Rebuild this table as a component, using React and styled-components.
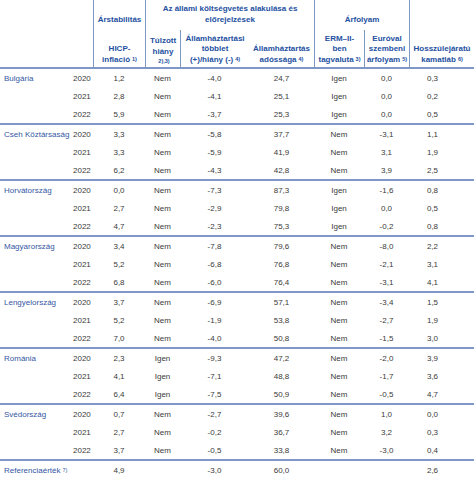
import React from "react";
import styled, { createGlobalStyle } from "styled-components";

const GlobalStyle = createGlobalStyle`
  body {
    margin: 0;
    background: #fff;
    font-family: "Liberation Sans", Arial, sans-serif;
  }
`;

const COLS = "70px 23px 52px 35px 69px 65px 50px 45px 65px";
const BLUE = "#24509f";
const LINE = "#7e97c4";

const Table = styled.div`
  width: 474px;
  font-size: 8px;
  color: #3a3a3a;
`;

const Header = styled.div`
  display: grid;
  grid-template-columns: ${COLS};
  grid-template-rows: 30px 37px;
  border-bottom: 2px solid ${LINE};
`;

const HeadCell = styled.div`
  grid-column: ${(p) => p.$col};
  grid-row: ${(p) => p.$row};
  display: flex;
  flex-direction: column;
  justify-content: flex-end;
  align-items: center;
  text-align: center;
  padding-bottom: ${(p) => (p.$top ? "5px" : "2px")};
  font-weight: bold;
  line-height: 10.5px;
  color: ${BLUE};
  white-space: nowrap;
  border-left: ${(p) => (p.$line ? `1px solid ${LINE}` : "none")};
`;

const Sup = styled.span`
  font-size: 5.5px;
  vertical-align: top;
  line-height: 8px;
  margin-left: 2px;
`;

const Group = styled.div`
  border-bottom: ${(p) => (p.$last ? "none" : `2px solid ${LINE}`)};
`;

const Row = styled.div`
  display: grid;
  grid-template-columns: ${COLS};
  height: 18px;
  align-items: center;
`;

const Country = styled.div`
  padding-left: 4px;
  color: #3557a3;
  white-space: nowrap;
`;

const Year = styled.div`
  padding-left: 3px;
`;

const Val = styled.div`
  text-align: center;
  padding-right: ${(p) => p.$pr || 0}px;
`;

const data = [
  ["Bulgária", [
    ["2020", "1,2", "Nem", "-4,0", "24,7", "Igen", "0,0", "0,3"],
    ["2021", "2,8", "Nem", "-4,1", "25,1", "Igen", "0,0", "0,2"],
    ["2022", "5,9", "Nem", "-3,7", "25,3", "Igen", "0,0", "0,5"],
  ]],
  ["Cseh Köztársaság", [
    ["2020", "3,3", "Nem", "-5,8", "37,7", "Nem", "-3,1", "1,1"],
    ["2021", "3,3", "Nem", "-5,9", "41,9", "Nem", "3,1", "1,9"],
    ["2022", "6,2", "Nem", "-4,3", "42,8", "Nem", "3,9", "2,5"],
  ]],
  ["Horvátország", [
    ["2020", "0,0", "Nem", "-7,3", "87,3", "Igen", "-1,6", "0,8"],
    ["2021", "2,7", "Nem", "-2,9", "79,8", "Igen", "0,0", "0,5"],
    ["2022", "4,7", "Nem", "-2,3", "75,3", "Igen", "-0,2", "0,8"],
  ]],
  ["Magyarország", [
    ["2020", "3,4", "Nem", "-7,8", "79,6", "Nem", "-8,0", "2,2"],
    ["2021", "5,2", "Nem", "-6,8", "76,8", "Nem", "-2,1", "3,1"],
    ["2022", "6,8", "Nem", "-6,0", "76,4", "Nem", "-3,1", "4,1"],
  ]],
  ["Lengyelország", [
    ["2020", "3,7", "Nem", "-6,9", "57,1", "Nem", "-3,4", "1,5"],
    ["2021", "5,2", "Nem", "-1,9", "53,8", "Nem", "-2,7", "1,9"],
    ["2022", "7,0", "Nem", "-4,0", "50,8", "Nem", "-1,5", "3,0"],
  ]],
  ["Románia", [
    ["2020", "2,3", "Igen", "-9,3", "47,2", "Nem", "-2,0", "3,9"],
    ["2021", "4,1", "Igen", "-7,1", "48,8", "Nem", "-1,7", "3,6"],
    ["2022", "6,4", "Igen", "-7,5", "50,9", "Nem", "-0,5", "4,7"],
  ]],
  ["Svédország", [
    ["2020", "0,7", "Nem", "-2,7", "39,6", "Nem", "1,0", "0,0"],
    ["2021", "2,7", "Nem", "-0,2", "36,7", "Nem", "3,2", "0,3"],
    ["2022", "3,7", "Nem", "-0,5", "33,8", "Nem", "-3,0", "0,4"],
  ]],
];

const Cells = ({ values }) =>
  values.map((v, i) => (
    <Val key={i} $pr={i === values.length - 1 ? 18 : 0}>
      {v}
    </Val>
  ));

const App = () => {
  return (
    <>
      <GlobalStyle />
      <Table>
        <Header>
          <HeadCell $col="3" $row="1" $top $line>
            Árstabilitás
          </HeadCell>
          <HeadCell $col="3" $row="2" $line>
            <span>HICP-</span>
            <span>
              inflació<Sup>1)</Sup>
            </span>
          </HeadCell>
          <HeadCell $col="4 / 7" $row="1" $top $line>
            <span>Az állami költségvetés alakulása és</span>
            <span>előrejelzések</span>
          </HeadCell>
          <HeadCell $col="4" $row="2" $line>
            <span>Túlzott</span>
            <span>hiány</span>
            <Sup>2),3)</Sup>
          </HeadCell>
          <HeadCell $col="5" $row="2" $line>
            <span>Államháztartási</span>
            <span>többlet</span>
            <span>
              (+)/hiány (-)<Sup>4)</Sup>
            </span>
          </HeadCell>
          <HeadCell $col="6" $row="2">
            <span>Államháztartás</span>
            <span>
              adóssága<Sup>4)</Sup>
            </span>
          </HeadCell>
          <HeadCell $col="7 / 9" $row="1" $top $line>
            Árfolyam
          </HeadCell>
          <HeadCell $col="7" $row="2" $line>
            <span>ERM–II-</span>
            <span>ben</span>
            <span>
              tagvaluta<Sup>3)</Sup>
            </span>
          </HeadCell>
          <HeadCell $col="8" $row="2" $line>
            <span>Euróval</span>
            <span>szembeni</span>
            <span>
              árfolyam<Sup>5)</Sup>
            </span>
          </HeadCell>
          <HeadCell $col="9" $row="1 / 3" $line>
            <span>Hosszúlejáratú</span>
            <span>
              kamatláb<Sup>6)</Sup>
            </span>
          </HeadCell>
        </Header>

        {data.map(([country, rows]) => (
          <Group key={country}>
            {rows.map(([year, ...values], i) => (
              <Row key={year}>
                <Country>{i === 0 ? country : ""}</Country>
                <Year>{year}</Year>
                <Cells values={values} />
              </Row>
            ))}
          </Group>
        ))}

        <Group $last>
          <Row>
            <Country>
              Referenciaérték<Sup>7)</Sup>
            </Country>
            <Year />
            <Cells values={["4,9", "", "-3,0", "60,0", "", "", "2,6"]} />
          </Row>
        </Group>
      </Table>
    </>
  );
};

export default App;
